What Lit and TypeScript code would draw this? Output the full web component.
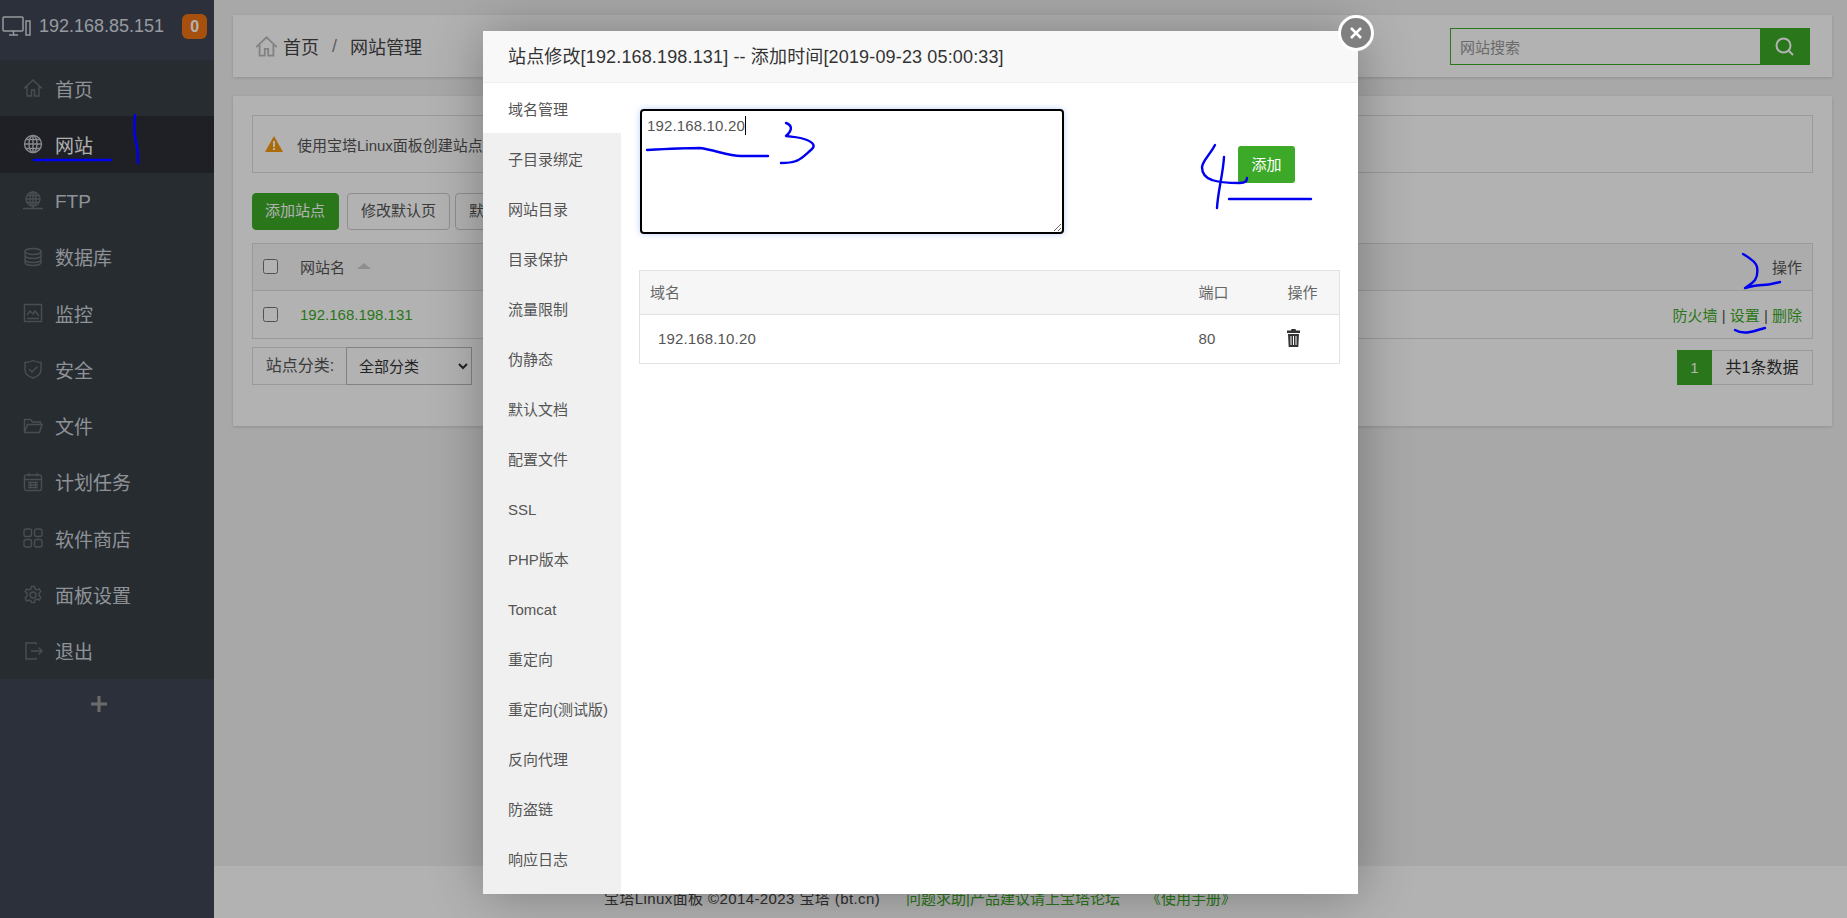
import { LitElement, html, css, svg } from 'lit';
import { customElement } from 'lit/decorators.js';

const NAV_ICONS: Record<string, unknown> = {
  home: svg`<path d="M1 10.5 10 2l9 8.5M4 8.5V18h4.5v-6h3v6H16V8.500"/>`,
  globe: svg`<circle cx="10" cy="10" r="8.500"/><ellipse cx="10" cy="10" rx="4" ry="8.500"/><path d="M10 1.500v17M1.500 10h17M3 5.500h14M3 14.500h14"/>`,
  ftp: svg`<circle cx="10" cy="8" r="7"/><ellipse cx="10" cy="8" rx="3.200" ry="7"/><path d="M10 1v14M3 8h14M4 4.500h12M4 11.500h12M0 17.500h20M10 15v2.500"/>`,
  db: svg`<ellipse cx="10" cy="4.500" rx="8" ry="3"/><path d="M2 4.500v11c0 1.700 3.600 3 8 3s8-1.300 8-3v-11M2 8.500c0 1.700 3.600 3 8 3s8-1.300 8-3M2 12.500c0 1.700 3.600 3 8 3s8-1.300 8-3"/>`,
  chart: svg`<rect x="1.500" y="1.500" width="17" height="17"/><path d="M4 12l3-4 3 3 2-3 4 5M4 15.500h12"/>`,
  shield: svg`<path d="M10 1.500c2.500 1.500 5 2 8 2v7.500c0 4-3.500 6.500-8 8-4.500-1.500-8-4-8-8V3.500c3 0 5.500-.5 8-2z"/><path d="M6 10l3 3 5.500-5.500"/>`,
  folder: svg`<path d="M1.500 16.500V3.500h6l2 2.500h8v2M1.500 16.500h15l2.500-8H4.500z"/>`,
  calendar: svg`<rect x="1.500" y="3" width="17" height="15.500" rx="2"/><path d="M1.500 7.500h17M6 1v3.500M14 1v3.500M5 10.500h10M5 13h10M5 15.500h10M7.500 9.500v7M12.500 9.500v7"/>`,
  grid: svg`<rect x="1" y="1" width="7.500" height="7.500" rx="2"/><rect x="11.500" y="1" width="7.500" height="7.500" rx="2"/><rect x="1" y="11.500" width="7.500" height="7.500" rx="2"/><rect x="11.500" y="11.500" width="7.500" height="7.500" rx="2"/>`,
  gear: svg`<circle cx="10" cy="10" r="3"/><path d="M8.500 1.500h3l.5 2.500 2 1 2.300-1 1.500 2.600L16 8.300v2.400l1.800 1.700-1.500 2.600-2.300-1-2 1-.5 2.500h-3L8 16l-2-1-2.300 1-1.500-2.600L4 10.700V8.300L2.200 6.600 3.700 4l2.300 1 2-1z"/>`,
  logout: svg`<path d="M13 3.500V2H3v16h10v-1.500M8 10h11M15.500 6.500 19 10l-3.500 3.500"/>`,
};

const NAV = [
  { label: '首页', icon: 'home' },
  { label: '网站', icon: 'globe', active: true },
  { label: 'FTP', icon: 'ftp', latin: true },
  { label: '数据库', icon: 'db' },
  { label: '监控', icon: 'chart' },
  { label: '安全', icon: 'shield' },
  { label: '文件', icon: 'folder' },
  { label: '计划任务', icon: 'calendar' },
  { label: '软件商店', icon: 'grid' },
  { label: '面板设置', icon: 'gear' },
  { label: '退出', icon: 'logout' },
];

const TABS = [
  '域名管理', '子目录绑定', '网站目录', '目录保护', '流量限制', '伪静态', '默认文档', '配置文件',
  'SSL', 'PHP版本', 'Tomcat', '重定向', '重定向(测试版)', '反向代理', '防盗链', '响应日志',
];

// hand drawn pen marks on top of the screenshot
const INK = [
  'M34 160H111',
  'M135 115C134 125 134 135 136 142C138 150 138 156 138 163',
  'M1743 254C1750 258 1756 262 1757 267C1758 273 1757 277 1755 280C1752 284 1748 286 1745 288C1752 286 1758 285 1763 285C1770 285 1775 283 1780 282',
  'M1735 330C1740 333 1745 333 1750 332C1756 331 1760 329 1765 328',
  'M647 150C665 149 685 148 700 148C715 150 728 156 741 156H768',
  'M786 123C792 125 793 130 786 136C793 137 800 137 807 140C814 143 815 146 812 149C806 154 802 159 796 161C791 163 786 163 781 163',
  'M1215 145C1210 155 1203 160 1202 167C1202 174 1206 178 1212 180C1220 183 1232 183 1240 183C1245 183 1247 181 1247 178',
  'M1224 157C1223 175 1218 190 1217 208',
  'M1229 199H1311',
];

@customElement('app-root')
export class AppRoot extends LitElement {
  static styles = css`
    :host {
      display: flex;
      position: relative;
      width: 1847px;
      height: 918px;
      overflow: hidden;
      font-family: 'Liberation Sans', 'Noto Sans CJK SC', sans-serif;
      font-size: 15px;
      color: #555;
      background: #f1f1f1;
    }

    /* sidebar */
    .sidebar {
      width: 214px;
      flex: none;
      display: flex;
      flex-direction: column;
      background: #3f4653;
    }
    .server {
      height: 60px;
      display: flex;
      align-items: flex-start;
      padding: 14px 0 0 2px;
      box-sizing: border-box;
      color: #d8dde2;
      font-size: 18px;
    }
    .server svg {
      width: 29px;
      height: 22px;
      margin: 2px 8px 0 0;
      fill: none;
      stroke: #d8dde2;
      stroke-width: 1.500;
    }
    .server .ip {
      line-height: 25px;
    }
    .badge {
      width: 25px;
      height: 25px;
      margin-left: 18px;
      border-radius: 6px;
      background: #f07314;
      color: #fff;
      font-size: 16px;
      font-weight: 700;
      line-height: 25px;
      text-align: center;
    }
    .nav {
      background: #383f46;
    }
    .nav-item {
      height: 56.270px;
      display: flex;
      align-items: center;
      padding-left: 23px;
      gap: 12px;
      color: #ccd2d8;
      font-size: 19px;
    }
    .nav-item svg {
      width: 20px;
      height: 20px;
      fill: none;
      stroke: #6a7077;
      stroke-width: 1.400;
    }
    .nav-item .latin {
      padding-top: 3px;
    }
    .nav-item.active {
      background: #2c2f36;
      color: #fbfbfb;
    }
    .nav-item.active svg {
      stroke: #c2c6ca;
    }
    .add {
      display: flex;
      justify-content: center;
      padding: 17px 16px 0 0;
    }
    .add svg {
      width: 16px;
      height: 16px;
      fill: #9a9a9a;
    }

    /* main column */
    .main {
      flex: 1;
      min-width: 0;
      display: flex;
      flex-direction: column;
    }
    .content {
      flex: 1;
      padding: 15px 15px 0 19px;
    }
    .card {
      background: #fff;
      box-shadow: 0 1px 3px rgba(0, 0, 0, 0.15);
    }
    .crumbs {
      height: 62px;
      display: flex;
      align-items: center;
      padding: 0 22px 0 22px;
      margin-bottom: 19px;
      color: #444;
      font-size: 18px;
    }
    .crumbs > svg {
      width: 23px;
      height: 23px;
      margin-right: 5px;
      fill: none;
      stroke: #bbb;
      stroke-width: 1.600;
    }
    .crumbs .sep {
      margin: 0 13px;
      color: #888;
    }
    .search {
      margin-left: auto;
      width: 360px;
      height: 37px;
      display: flex;
      box-sizing: border-box;
      border: 1px solid #3da928;
      font-size: 15px;
    }
    .search span {
      flex: 1;
      padding: 1px 0 0 9px;
      color: #999;
      line-height: 35px;
    }
    .search div {
      width: 49px;
      background: #3da928;
      display: flex;
      align-items: center;
      justify-content: center;
    }
    .search svg {
      width: 21px;
      height: 21px;
      fill: none;
      stroke: #fff;
      stroke-width: 2;
    }
    .panel {
      padding: 19px 19px 41px;
    }
    .alert {
      height: 58px;
      display: flex;
      align-items: center;
      box-sizing: border-box;
      border: 1px solid #ddd;
      padding-left: 12px;
      gap: 14px;
      white-space: nowrap;
      color: #555;
    }
    .alert svg {
      width: 18px;
      height: 16px;
    }
    .btns {
      display: flex;
      gap: 5px;
      margin: 20px 0 13.500px;
    }
    .btn {
      height: 36.500px;
      box-sizing: border-box;
      padding: 0 13px;
      border: 1px solid #ccc;
      border-radius: 4px;
      line-height: 34.500px;
      background: #fff;
      color: #555;
      white-space: nowrap;
    }
    .btn.primary {
      width: 87px;
      margin-right: 3px;
      padding: 0 12px;
      background: #3da928;
      border-color: #3da928;
      color: #fff;
    }
    .btn.wide {
      width: 102px;
    }
    .list {
      border: 1px solid #ddd;
      box-sizing: border-box;
    }
    .list-row {
      display: flex;
      align-items: center;
      padding: 0 10px 0 10px;
    }
    .list-row.head {
      height: 47px;
      background: #f6f6f6;
      border-bottom: 1px solid #ddd;
      box-sizing: border-box;
      padding-bottom: 2px;
    }
    .list-row.body {
      height: 47px;
    }
    .list-row input {
      width: 15px;
      height: 15px;
      margin: 0 22px 0 0;
    }
    .sort {
      width: 0;
      height: 0;
      margin-left: 12px;
      border: 7.500px solid transparent;
      border-top: 0;
      border-bottom: 6px solid #ccc;
    }
    .right {
      margin-left: auto;
    }
    .site {
      color: #3da928;
    }
    .list-row a {
      color: #3da928;
    }
    .foot {
      display: flex;
      justify-content: space-between;
      align-items: flex-start;
      margin-top: 8px;
    }
    .filter {
      display: flex;
      height: 38px;
      box-sizing: border-box;
      border: 1px solid #ddd;
      width: 220px;
    }
    .filter span {
      width: 94px;
      text-align: center;
      font-size: 16px;
      line-height: 36px;
    }
    .filter select {
      flex: 1;
      border: 1px solid #bbb;
      margin: -1px;
      padding-left: 8px;
      background: #fff;
      color: #333;
      font: inherit;
    }
    .pager {
      display: flex;
      margin-top: 3px;
      height: 35px;
      line-height: 35px;
    }
    .pager b {
      width: 35px;
      background: #3da928;
      color: #fff;
      font-weight: 400;
      text-align: center;
    }
    .pager span {
      width: 101px;
      box-sizing: border-box;
      border: 1px solid #ddd;
      border-left: 0;
      line-height: 33px;
      text-align: center;
      color: #333;
      font-size: 16px;
    }
    .footer {
      height: 52px;
      box-sizing: border-box;
      padding: 24px 0 0 390px;
      display: flex;
      gap: 26px;
      line-height: 18px;
      background: #fff;
      color: #444;
      white-space: nowrap;
    }
    .footer span {
      letter-spacing: 0.4px;
    }
    .footer a {
      color: #3da928;
    }

    /* layer */
    .shade {
      position: absolute;
      inset: 0;
      background: rgba(0, 0, 0, 0.3);
    }
    .modal {
      position: absolute;
      left: 483px;
      top: 31px;
      width: 875px;
      height: 863px;
      display: flex;
      flex-direction: column;
      background: #fff;
      box-shadow: 1px 1px 50px rgba(0, 0, 0, 0.3);
    }
    .modal-title {
      height: 52px;
      flex: none;
      box-sizing: border-box;
      padding-left: 25px;
      background: #f8f8f8;
      border-bottom: 1px solid #eee;
      color: #333;
      font-size: 18px;
      letter-spacing: 0.15px;
      line-height: 52px;
      white-space: nowrap;
    }
    .close {
      position: absolute;
      right: -16px;
      top: -16px;
      width: 36px;
      height: 36px;
      box-sizing: border-box;
      border: 3px solid #fff;
      border-radius: 50%;
      background: #808080;
      display: flex;
      align-items: center;
      justify-content: center;
    }
    .close svg {
      width: 14px;
      height: 14px;
      stroke: #fff;
      stroke-width: 2.500;
    }
    .modal-body {
      flex: 1;
      display: flex;
      min-height: 0;
    }
    .tabs {
      width: 138px;
      flex: none;
      background: #f0f0f0;
    }
    .tab {
      height: 50px;
      box-sizing: border-box;
      padding-left: 25px;
      line-height: 54px;
      color: #555;
      white-space: nowrap;
    }
    .tab.active {
      background: #fff;
    }
    .pane {
      flex: 1;
      padding: 26px 18px 0;
    }
    .add-row {
      position: relative;
      display: flex;
      align-items: flex-start;
    }
    textarea {
      display: block;
      width: 424px;
      height: 125px;
      box-sizing: border-box;
      margin: 0 0 0 1px;
      padding: 3px 5px;
      border: 2px solid #000;
      border-radius: 4px;
      box-shadow: 0 0 6px rgba(80, 140, 255, 0.4);
      outline: none;
      color: #555;
      font: inherit;
      letter-spacing: 0.15px;
      line-height: 24px;
    }
    .caret {
      position: absolute;
      left: 106px;
      top: 7px;
      width: 1px;
      height: 19px;
      background: #000;
    }
    .add-btn {
      width: 57px;
      height: 37px;
      margin: 37px 0 0 174px;
      border-radius: 3px;
      background: #3da928;
      color: #fff;
      font-size: 15px;
      line-height: 37px;
      text-align: center;
    }
    table {
      width: 700px;
      margin-top: 36px;
      border: 1px solid #e2e2e2;
      border-collapse: collapse;
      table-layout: fixed;
    }
    th {
      height: 41px;
      padding: 0 0 2px 10px;
      background: #f6f6f6;
      border-bottom: 1px solid #e2e2e2;
      font-weight: 400;
      font-size: 15px;
      color: #666;
      text-align: left;
    }
    td {
      height: 46px;
      padding: 0 0 2px 10px;
      color: #555;
      letter-spacing: 0.15px;
    }
    td:first-child {
      padding-left: 18px;
    }
    td svg {
      display: block;
      width: 15px;
      height: 18px;
      margin-left: -2px;
      fill: #333;
    }
    .ink {
      position: absolute;
      left: 0;
      top: 0;
      width: 1847px;
      height: 918px;
      pointer-events: none;
      fill: none;
      stroke: #0000f0;
      stroke-width: 2.400;
      stroke-linecap: round;
      stroke-linejoin: round;
    }
  `;

  private renderSidebar() {
    return html`
      <aside class="sidebar">
        <div class="server">
          <svg viewBox="0 0 29 22">
            <rect x="1" y="1" width="20" height="14" rx="1" />
            <path d="M7 19h9M11.500 15v4" />
            <rect x="24" y="5" width="4" height="14" />
          </svg>
          <span class="ip">192.168.85.151</span>
          <span class="badge">0</span>
        </div>
        <nav class="nav">
          ${NAV.map(
            (item) => html`
              <div class="nav-item ${item.active ? 'active' : ''}">
                <svg viewBox="0 0 20 20">${NAV_ICONS[item.icon]}</svg>
                <span class=${item.latin ? 'latin' : ''}>${item.label}</span>
              </div>
            `
          )}
        </nav>
        <div class="add">
          <svg viewBox="0 0 16 16"><path d="M6.500 0h3v6.500H16v3H9.500V16h-3V9.500H0v-3h6.500z" /></svg>
        </div>
      </aside>
    `;
  }

  private renderMain() {
    return html`
      <div class="main">
        <div class="content">
          <div class="card crumbs">
            <svg viewBox="0 0 20 20">${NAV_ICONS.home}</svg>
            <span>首页</span>
            <span class="sep">/</span>
            <span>网站管理</span>
            <div class="search">
              <span>网站搜索</span>
              <div>
                <svg viewBox="0 0 21 21"><circle cx="9.500" cy="9.500" r="7" /><path d="M14.500 14.500 19 19" /></svg>
              </div>
            </div>
          </div>
          <div class="card panel">
            <div class="alert">
              <svg viewBox="0 0 18 16">
                <path d="M9 0l9 16H0z" fill="#f59a0c" />
                <path d="M8 5h2v6H8zM8 12h2v2H8z" fill="#fff" />
              </svg>
              <span>使用宝塔Linux面板创建站点</span>
            </div>
            <div class="btns">
              <div class="btn primary">添加站点</div>
              <div class="btn">修改默认页</div>
              <div class="btn wide">默认</div>
            </div>
            <div class="list">
              <div class="list-row head">
                <input type="checkbox" />
                <span>网站名</span>
                <i class="sort"></i>
                <span class="right">操作</span>
              </div>
              <div class="list-row body">
                <input type="checkbox" />
                <span class="site">192.168.198.131</span>
                <span class="right"><a>防火墙</a> | <a>设置</a> | <a>删除</a></span>
              </div>
            </div>
            <div class="foot">
              <div class="filter">
                <span>站点分类:</span>
                <select><option>全部分类</option></select>
              </div>
              <div class="pager"><b>1</b><span>共1条数据</span></div>
            </div>
          </div>
        </div>
        <div class="footer">
          <span>宝塔Linux面板 ©2014-2023 宝塔 (bt.cn)</span>
          <a>问题求助|产品建议请上宝塔论坛</a>
          <a>《使用手册》</a>
        </div>
      </div>
    `;
  }

  private renderModal() {
    return html`
      <div class="modal">
        <div class="modal-title">站点修改[192.168.198.131] -- 添加时间[2019-09-23 05:00:33]</div>
        <div class="close">
          <svg viewBox="0 0 14 14"><path d="M2 2l10 10M12 2 2 12" /></svg>
        </div>
        <div class="modal-body">
          <div class="tabs">
            ${TABS.map((tab, i) => html`<div class="tab ${i === 0 ? 'active' : ''}">${tab}</div>`)}
          </div>
          <div class="pane">
            <div class="add-row">
              <textarea .value=${'192.168.10.20'}></textarea>
              <i class="caret"></i>
              <div class="add-btn">添加</div>
            </div>
            <table>
              <colgroup>
                <col style="width: 549px" />
                <col style="width: 89px" />
                <col style="width: 62px" />
              </colgroup>
              <tr><th>域名</th><th>端口</th><th>操作</th></tr>
              <tr>
                <td>192.168.10.20</td>
                <td>80</td>
                <td>
                  <svg viewBox="0 0 15 18">
                    <path
                      d="M5.500 0h4l.5 1.500h4V4H1V1.500h4zM2 5h11l-.7 13H2.700zM4.500 7v9h1V7zM7 7v9h1V7zM9.500 7v9h1V7z"
                      fill-rule="evenodd"
                    />
                  </svg>
                </td>
              </tr>
            </table>
          </div>
        </div>
      </div>
    `;
  }

  render() {
    return html`
      ${this.renderSidebar()} ${this.renderMain()}
      <div class="shade"></div>
      ${this.renderModal()}
      <svg class="ink" viewBox="0 0 1847 918">${INK.map((d) => svg`<path d=${d} />`)}</svg>
    `;
  }
}
